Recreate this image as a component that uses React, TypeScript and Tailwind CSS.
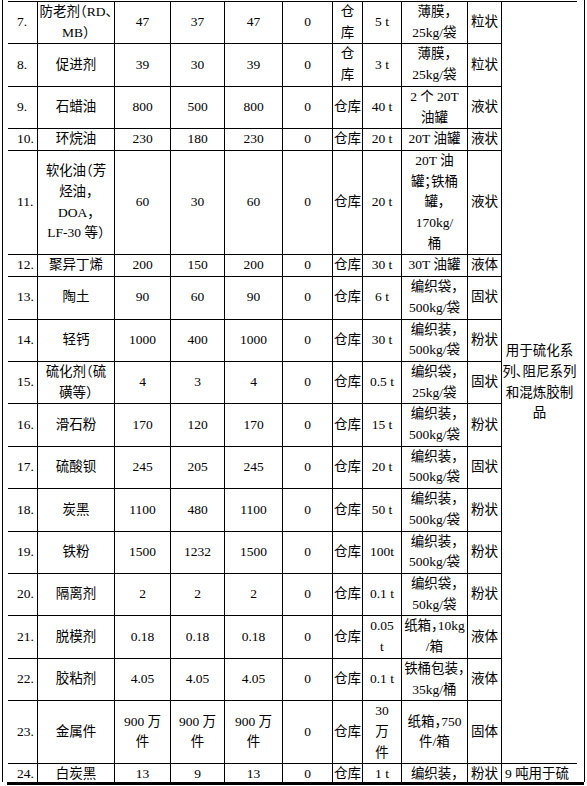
const rows: string[][] = [
  ["7.", "防老剂（RD、\nMB）", "47", "37", "47", "0", "仓\n库", "5 t", "薄膜，\n25kg/袋", "粒状"],
  ["8.", "促进剂", "39", "30", "39", "0", "仓\n库", "3 t", "薄膜，\n25kg/袋", "粒状"],
  ["9.", "石蜡油", "800", "500", "800", "0", "仓库", "40 t", "2 个 20T\n油罐", "液状"],
  ["10.", "环烷油", "230", "180", "230", "0", "仓库", "20 t", "20T 油罐", "液状"],
  ["11.", "软化油（芳\n烃油，\nDOA，\nLF-30 等）", "60", "30", "60", "0", "仓库", "20 t", "20T 油\n罐；铁桶\n罐，\n170kg/\n桶", "液状"],
  ["12.", "聚异丁烯", "200", "150", "200", "0", "仓库", "30 t", "30T 油罐", "液体"],
  ["13.", "陶土", "90", "60", "90", "0", "仓库", "6 t", "编织袋，\n500kg/袋", "固状"],
  ["14.", "轻钙", "1000", "400", "1000", "0", "仓库", "30 t", "编织装，\n500kg/袋", "粉状"],
  ["15.", "硫化剂（硫\n磺等）", "4", "3", "4", "0", "仓库", "0.5 t", "编织袋，\n25kg/袋", "固状"],
  ["16.", "滑石粉", "170", "120", "170", "0", "仓库", "15 t", "编织装，\n500kg/袋", "粉状"],
  ["17.", "硫酸钡", "245", "205", "245", "0", "仓库", "20 t", "编织装，\n500kg/袋", "固状"],
  ["18.", "炭黑", "1100", "480", "1100", "0", "仓库", "50 t", "编织装，\n500kg/袋", "粉状"],
  ["19.", "铁粉", "1500", "1232", "1500", "0", "仓库", "100t", "编织装，\n500kg/袋", "粉状"],
  ["20.", "隔离剂", "2", "2", "2", "0", "仓库", "0.1 t", "编织袋，\n50kg/袋", "粉状"],
  ["21.", "脱模剂", "0.18", "0.18", "0.18", "0", "仓库", "0.05\nt", "纸箱，10kg\n/箱", "液体"],
  ["22.", "胶粘剂", "4.05", "4.05", "4.05", "0", "仓库", "0.1 t", "铁桶包装，\n35kg/桶", "液体"],
  ["23.", "金属件", "900 万\n件", "900 万\n件", "900 万\n件", "0", "仓库", "30\n万\n件", "纸箱，750\n件/箱", "固体"],
];

// last row runs off the page, only its first line shows
const lastRow = ["24.", "白炭黑", "13", "9", "13", "0", "仓库", "1 t", "编织装，", "粉状"];

const cell = "flex items-center justify-center text-center whitespace-pre border-r border-b border-black";

export default function App() {
  return (
    <div className="w-[587px] h-[786px] bg-white text-black text-[13.5px] leading-[20.7px] font-['Liberation_Serif','Noto_Sans_CJK_SC',serif] [font-feature-settings:'halt']">
      <div className="ml-[2px] w-[583px] h-[782px] overflow-hidden border-x border-black pt-px pl-[5px] pr-[7px]">
        <div className="grid grid-cols-[30px_77px_56px_54px_58px_50px_30px_39px_66px_34px_75px] border-t border-black">
          {/* merged usage column */}
          <div className="col-start-11 row-start-1 row-span-17 flex items-center justify-center text-center whitespace-pre border-b border-black">
            {"用于硫化系\n列、阻尼系列\n和混炼胶制\n品"}
          </div>

          {rows.map((row) =>
            row.map((text, i) => (
              <div
                key={row[0] + i}
                className={i === 0 ? "flex items-center pl-[9px] border-r border-b border-black" : cell}
              >
                {text}
              </div>
            ))
          )}

          {lastRow.map((text, i) => (
            <div
              key={"24-" + i}
              className={
                i === 0
                  ? "flex items-start pl-[9px] border-r border-black"
                  : "flex items-start justify-center text-center whitespace-pre border-r border-black"
              }
            >
              {text}
            </div>
          ))}
          <div className="flex items-start pl-[3px] whitespace-pre">9 吨用于硫</div>
        </div>
      </div>
      <div className="ml-[7px] w-[577px] h-[3px] bg-black" />
    </div>
  );
}
